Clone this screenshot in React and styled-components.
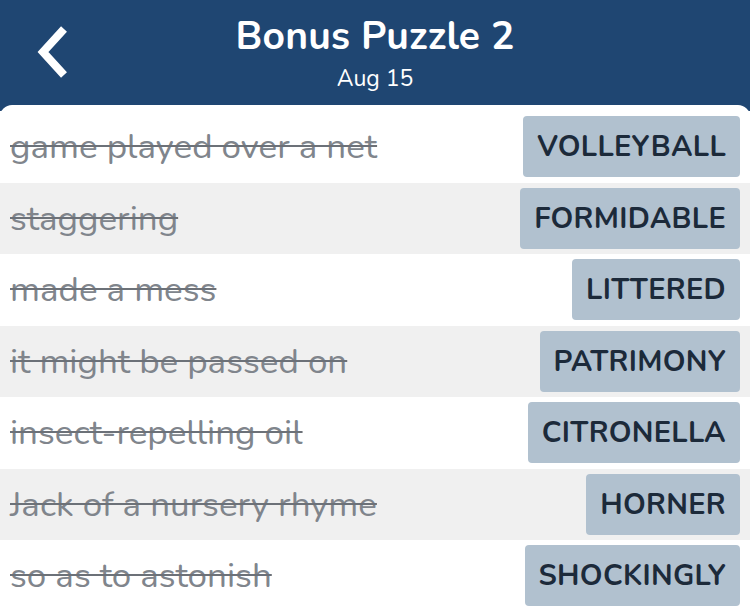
import React from 'react';
import styled, { createGlobalStyle } from 'styled-components';

const GlobalStyle = createGlobalStyle`
  html, body {
    margin: 0;
    padding: 0;
    background: #1f4672;
    font-family: "Nunito", Lato, "Noto Sans", sans-serif;
  }
`;

const clues = [
  { clue: 'game played over a net', answer: 'VOLLEYBALL' },
  { clue: 'staggering', answer: 'FORMIDABLE' },
  { clue: 'made a mess', answer: 'LITTERED' },
  { clue: 'it might be passed on', answer: 'PATRIMONY' },
  { clue: 'insect-repelling oil', answer: 'CITRONELLA' },
  { clue: 'Jack of a nursery rhyme', answer: 'HORNER' },
  { clue: 'so as to astonish', answer: 'SHOCKINGLY' },
];

const Page = styled.div`
  width: 750px;
  height: 613px;
  overflow: hidden;
  background: #1f4672;
  display: flex;
  flex-direction: column;
`;

const Header = styled.header`
  height: 105px;
  flex-shrink: 0;
  display: grid;
  grid-template-columns: 100px 1fr 100px;
  align-items: center;
  color: #fff;
`;

const BackButton = styled.button`
  background: none;
  border: none;
  padding: 0;
  margin-left: 34px;
  width: 40px;
  height: 52px;
  display: flex;
  align-items: center;
  cursor: pointer;
  margin-top: -2px;
`;

const TitleBlock = styled.div`
  align-self: start;
  text-align: center;
  padding-top: 17px;
`;

const Title = styled.h1`
  margin: 0;
  font-size: 39px;
  font-weight: 700;
  line-height: 40px;
  letter-spacing: 0.2px;
`;

const Subtitle = styled.div`
  font-size: 23px;
  line-height: 26px;
  margin-top: 9px;
`;

const Panel = styled.main`
  flex: 1;
  background: #fff;
  border-radius: 12px 12px 0 0;
  padding-top: 6px;
`;

const Row = styled.div`
  height: 71.5px;
  display: flex;
  align-items: center;
  justify-content: space-between;
  padding: 0 10px;
  box-sizing: border-box;
  background: ${(p) => (p.$shaded ? '#f0f0f0' : '#fff')};
`;

const Clue = styled.span`
  font-size: 35px;
  color: #80858c;
  text-decoration: line-through;
  text-decoration-thickness: 2px;
  text-decoration-color: #6c7178;
  white-space: nowrap;
`;

const Answer = styled.span`
  background: #b1c1cf;
  color: #1c2a3a;
  font-weight: 700;
  font-size: 29px;
  letter-spacing: 0.3px;
  height: 61px;
  display: flex;
  align-items: center;
  padding: 0 14px;
  border-radius: 4px;
`;

const Chevron = () => (
  <svg width="36" height="54" viewBox="0 0 36 54">
    <polyline
      points="30,4 9,27 30,50"
      fill="none"
      stroke="#fff"
      strokeWidth="8"
      strokeLinecap="butt"
      strokeLinejoin="miter"
    />
  </svg>
);

const App = () => {
  return (
    <Page>
      <GlobalStyle />
      <Header>
        <BackButton aria-label="Back">
          <Chevron />
        </BackButton>
        <TitleBlock>
          <Title>Bonus Puzzle 2</Title>
          <Subtitle>Aug 15</Subtitle>
        </TitleBlock>
        <div />
      </Header>
      <Panel>
        {clues.map((c, i) => (
          <Row key={c.answer} $shaded={i % 2 === 1}>
            <Clue>{c.clue}</Clue>
            <Answer>{c.answer}</Answer>
          </Row>
        ))}
      </Panel>
    </Page>
  );
};

export default App;
